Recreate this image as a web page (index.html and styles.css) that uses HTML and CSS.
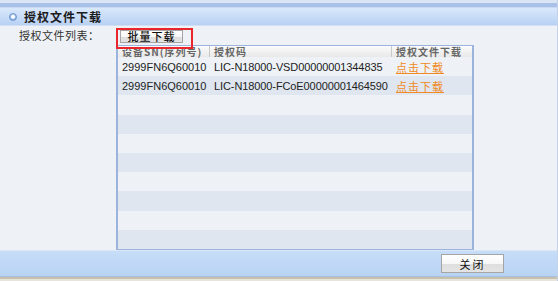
FILE: index.html
```html
<!DOCTYPE html>
<html lang="zh-cn">
<head>
  <meta charset="UTF-8" />
  <title>授权文件下载</title>
  <link rel="stylesheet" href="styles.css">
</head>
<body>
  <div class="dialog">
    <div class="top-strip"></div>
    <div class="top-bar"></div>
    <div class="title-bar">
      <span class="bullet"></span>
      <span class="title">授权文件下载</span>
    </div>

    <div class="content">
      <div class="label">授权文件列表：</div>
      <div class="list-area">
        <button class="btn batch">批量下载</button>
        <div class="grid">
          <div class="row head">
            <div class="c1">设备SN(序列号)</div>
            <div class="c2">授权码</div>
            <div class="c3">授权文件下载</div>
          </div>
          <div class="row">
            <div class="c1">2999FN6Q60010</div>
            <div class="c2">LIC-N18000-VSD00000001344835</div>
            <div class="c3"><a href="#">点击下载</a></div>
          </div>
          <div class="row alt">
            <div class="c1">2999FN6Q60010</div>
            <div class="c2">LIC-N18000-FCoE00000001464590</div>
            <div class="c3"><a href="#">点击下载</a></div>
          </div>
          <div class="row"></div>
          <div class="row alt"></div>
          <div class="row"></div>
          <div class="row alt"></div>
          <div class="row"></div>
          <div class="row alt"></div>
          <div class="row"></div>
          <div class="row alt"></div>
        </div>
        <div class="mark"></div>
      </div>
    </div>

    <div class="footer">
      <button class="btn close">关闭</button>
    </div>
    <div class="bottom-line"></div>
    <div class="bottom-edge"></div>
  </div>
</body>
</html>
```

FILE: styles.css
```css
body {
  margin: 0;
  background: #fff;
  font-family: "Liberation Sans", "Noto Sans CJK SC", sans-serif;
  font-size: 11px;
  color: #222;
}
.dialog {
  width: 557px;
  height: 281px;
  border-right: 1px solid #c4d2e8;
  background: #eef2f7;
}
.top-strip {
  height: 3px;
  background: #dce5f4;
}
.top-bar {
  height: 4px;
  background: #a9c0e8;
  border-bottom: 1px solid #c9d9f2;
}
.title-bar {
  height: 17px;
  display: flex;
  align-items: center;
  padding-left: 9px;
  background: linear-gradient(#d9e8fc, #b8d1f3);
  border-bottom: 1px solid #d3e0f3;
}
.bullet {
  width: 6px;
  height: 6px;
  border-radius: 50%;
  background: radial-gradient(circle at 50% 45%, #fff 0, #fff 30%, #7fa6dd 70%);
  border: 1px solid #6d96d2;
  margin-right: 7px;
}
.title {
  font-family: "Noto Sans CJK SC", sans-serif;
  font-weight: bold;
  font-size: 12px;
  letter-spacing: 1px;
  color: #1c1c1c;
}
.content {
  height: 224px;
  display: flex;
  align-items: flex-start;
}
.label {
  width: 97px;
  padding-left: 19px;
  padding-top: 3px;
  font-family: "Noto Sans CJK SC", sans-serif;
  letter-spacing: 0.5px;
  color: #333;
  line-height: 13px;
}
.list-area {
  position: relative;
  padding-top: 4px;
}
.btn {
  display: block;
  font-family: "Noto Sans CJK SC", sans-serif;
  font-size: 11px;
  color: #111;
  border: 1px solid #a5a5a5;
  background: linear-gradient(#ffffff 0, #f7f7f7 50%, #dedede 51%, #e4e4e4 100%);
  padding: 0;
  cursor: pointer;
}
.batch {
  margin-left: 4px;
  width: 63px;
  height: 13px;
  line-height: 11px;
  font-weight: 500;
  letter-spacing: 1px;
}
.mark {
  position: absolute;
  left: 0;
  top: 2px;
  width: 73px;
  height: 17px;
  border: 2px solid #e8262b;
}
.grid {
  margin-top: 2px;
  width: 354px;
  border: 1px solid #9bb3dd;
  border-left-width: 2px;
  border-right-width: 2px;
  background: #eef2f7;
}
.row {
  display: flex;
  height: 19.2px;
  align-items: center;
  white-space: nowrap;
}
.row.alt {
  background: #dfe6ef;
}
.row.head {
  height: 11px;
  background: linear-gradient(#fbfbfb, #e8e8e8);
  color: #666;
  font-weight: bold;
  font-family: "Noto Sans CJK SC", sans-serif;
  font-size: 10px;
}
.row.head div {
  border-right: 1px solid #c9c9c9;
  height: 11px;
  line-height: 11px;
  letter-spacing: 1px;
}
.row.head .c3 {
  border-right: none;
}
.c1 {
  width: 92px;
  padding-left: 4px;
  box-sizing: border-box;
}
.c2 {
  width: 182px;
  padding-left: 4px;
  box-sizing: border-box;
  letter-spacing: -0.1px;
}
.c3 {
  width: 80px;
  padding-left: 4px;
  box-sizing: border-box;
}
.c3 a {
  color: #f08a24;
  font-family: "Noto Sans CJK SC", sans-serif;
  letter-spacing: 1px;
}
.footer {
  height: 25px;
  border-top: 1px solid #d8e6f8;
  background: linear-gradient(#c7ddf8, #b9d3f3);
  display: flex;
  align-items: center;
  justify-content: flex-end;
  padding-right: 53px;
}
.close {
  width: 63px;
  height: 19px;
  letter-spacing: 2px;
}
.bottom-line {
  height: 1px;
  background: #a8bfe2;
}
.bottom-edge {
  height: 2px;
  background: #c6c1ab;
  border-bottom: 2px solid #e6e4dc;
}
```
